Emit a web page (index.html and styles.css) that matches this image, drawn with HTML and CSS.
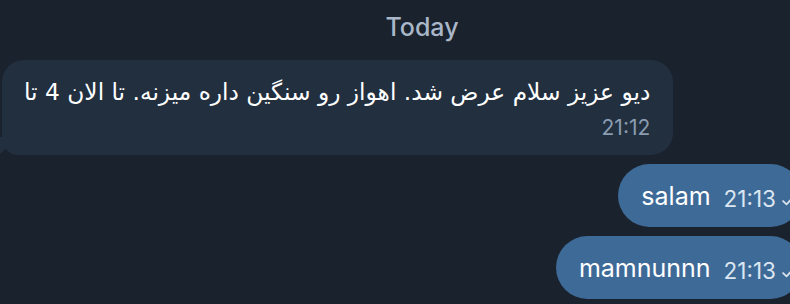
FILE: index.html
```html
<!DOCTYPE html>
<html lang="en">
<head>
  <meta charset="UTF-8" />
  <title>Chat</title>
  <link rel="stylesheet" href="styles.css">
</head>
<body>

<section class="chat">
  <div class="date">Today</div>

  <div class="row incoming">
    <div class="bubble">
      <p class="text" dir="rtl">دیو عزیز سلام عرض شد. اهواز رو سنگین داره میزنه. تا الان 4 تا</p>
      <span class="time">21:12</span>
      <svg class="tail" width="24" height="18" viewBox="0 0 24 18">
        <path d="M0 0 H24 V18 C20 12 16 9 12 9 C7 9 4 14 0 17 Z" fill="#222f3f"/>
      </svg>
    </div>
  </div>

  <div class="row outgoing">
    <div class="bubble">
      <span class="text">salam</span>
      <span class="meta">21:13
        <svg class="check" width="13" height="11" viewBox="0 0 12 10">
          <path d="M1 5.5 L4.2 8.6 L11 1.2" fill="none" stroke="#d8e3ee" stroke-width="1.6" stroke-linecap="round" stroke-linejoin="round"/>
        </svg>
      </span>
    </div>
  </div>

  <div class="row outgoing">
    <div class="bubble">
      <span class="text">mamnunnn</span>
      <span class="meta">21:13
        <svg class="check" width="13" height="11" viewBox="0 0 12 10">
          <path d="M1 5.5 L4.2 8.6 L11 1.2" fill="none" stroke="#d8e3ee" stroke-width="1.6" stroke-linecap="round" stroke-linejoin="round"/>
        </svg>
      </span>
    </div>
  </div>
</section>

</body>
</html>
```

FILE: styles.css
```css
    html, body {
      margin: 0;
      height: 100%;
    }
    body {
      font-family: Inter, 'Noto Sans', 'DejaVu Sans', sans-serif;
      background-color: #1a222d;
      color: #fff;
      overflow: hidden;
    }
    .chat {
      display: flex;
      flex-direction: column;
      gap: 9px;
    }
    .date {
      text-align: center;
      color: #a9b7c8;
      font-size: 25px;
      font-weight: 500;
      line-height: 28px;
      padding: 13px 0 10px 54px;
    }
    .row {
      display: flex;
    }
    .incoming {
      justify-content: flex-start;
      padding-left: 2px;
    }
    .outgoing {
      justify-content: flex-end;
      margin-right: -12px;
    }
    .incoming .bubble {
      position: relative;
      background-color: #222f3f;
      border-radius: 22px 22px 22px 16px;
      padding: 16px 23px 14px 22px;
      display: flex;
      flex-direction: column;
      align-items: flex-end;
    }
    .incoming .text {
      margin: 0;
      font-family: 'DejaVu Sans', sans-serif;
      font-size: 23.3px;
      line-height: 32px;
    }
    .incoming .time {
      display: block;
      margin-top: 7px;
      line-height: 26px;
      font-size: 21px;
      color: #8a9cb0;
    }
    .tail {
      position: absolute;
      left: -2px;
      bottom: 0;
    }
    .outgoing .bubble {
      background-color: #3e6a97;
      border-radius: 32px;
      height: 63px;
      padding: 0 7px 0 23px;
      display: flex;
      align-items: center;
    }
    .outgoing .text {
      font-size: 25px;
    }
    .meta {
      display: flex;
      align-items: center;
      gap: 6px;
      margin: 6px 0 0 13px;
      font-size: 22.5px;
      color: #dbe6f1;
    }
    .check {
      margin-top: 4px;
    }
```
